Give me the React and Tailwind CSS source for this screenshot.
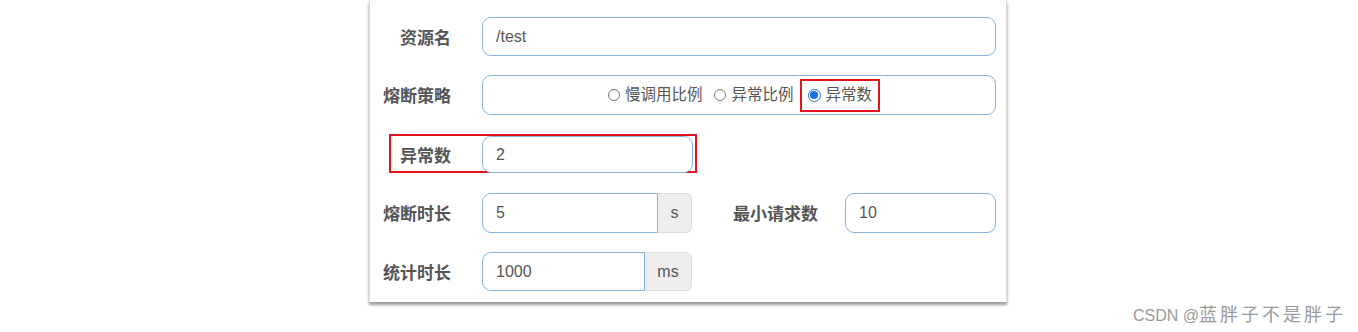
const labelCls =
  "text-right text-[17px] font-bold text-[#555] leading-none shrink-0 pt-[3px]";
const inputCls =
  "flex items-center pl-[13px] border border-[#88b2df] bg-white text-[16px] text-[#555]";

const Radio = ({ checked, label }) => (
  <div className="flex items-center gap-[5px]">
    {checked ? (
      <span className="w-[13px] h-[13px] rounded-full border border-[#1a6fe0] flex items-center justify-center">
        <span className="w-[8px] h-[8px] rounded-full bg-[#1a6fe0]" />
      </span>
    ) : (
      <span className="w-[12px] h-[12px] rounded-full border border-[#777]" />
    )}
    <span className="text-[15.5px] text-[#555]">{label}</span>
  </div>
);

const App = () => {
  return (
    <div
      className="relative w-[1358px] h-[332px] bg-white overflow-hidden"
      style={{ fontFamily: '"Liberation Sans", "Noto Sans CJK SC", sans-serif' }}
    >
      <div className="ml-[369px] w-[638px] h-[302px] bg-white border-x border-[#dcdcdc] shadow-[0_3px_3px_rgba(0,0,0,0.4)] pt-[17px]">
        {/* 资源名 */}
        <div className="flex items-center">
          <div className={`${labelCls} w-[81px]`}>资源名</div>
          <div className={`${inputCls} ml-[31px] w-[514px] h-[39px] rounded-[9px]`}>
            /test
          </div>
        </div>

        {/* 熔断策略 */}
        <div className="flex items-center mt-[19px]">
          <div className={`${labelCls} w-[81px]`}>熔断策略</div>
          <div className="ml-[31px] w-[514px] h-[40px] rounded-[9px] border border-[#88b2df] flex items-center justify-center gap-[12px] pl-[10px]">
            <Radio label="慢调用比例" />
            <Radio label="异常比例" />
            <div className="flex items-center h-[33px] px-[6px] border-2 border-[#e5131b] -ml-[6px]">
              <Radio checked label="异常数" />
            </div>
          </div>
        </div>

        {/* 异常数 */}
        <div className="ml-[19px] mt-[19px] w-[308px] h-[39px] border-2 border-[#e5131b] flex items-stretch">
          <div className={`${labelCls} w-[60px] self-center mt-[3px]`}>异常数</div>
          <div className={`${inputCls} ml-[31px] w-[211px] rounded-[9px] -mb-[2px]`}>
            2
          </div>
        </div>

        {/* 熔断时长 / 最小请求数 */}
        <div className="flex items-center mt-[20px]">
          <div className={`${labelCls} w-[81px]`}>熔断时长</div>
          <div className="ml-[31px] flex h-[40px]">
            <div className={`${inputCls} w-[176px] rounded-l-[9px]`}>5</div>
            <div className="w-[34px] flex items-center justify-center bg-[#eeeeee] border border-l-0 border-[#dddddd] rounded-r-[6px] text-[16px] text-[#555]">
              s
            </div>
          </div>
          <div className={`${labelCls} ml-[41px]`}>最小请求数</div>
          <div className={`${inputCls} ml-[27px] w-[151px] h-[40px] rounded-[9px]`}>
            10
          </div>
        </div>

        {/* 统计时长 */}
        <div className="flex items-center mt-[19px]">
          <div className={`${labelCls} w-[81px]`}>统计时长</div>
          <div className="ml-[31px] flex h-[39px]">
            <div className={`${inputCls} w-[163px] rounded-l-[9px]`}>1000</div>
            <div className="w-[47px] flex items-center justify-center bg-[#eeeeee] border border-l-0 border-[#dddddd] rounded-r-[6px] text-[16px] text-[#555]">
              ms
            </div>
          </div>
        </div>
      </div>

      <div className="absolute left-[1133px] top-[302px] text-[#9a9a9a] text-[16px] whitespace-nowrap">
        CSDN @<span className="text-[18px] tracking-[3px]">蓝胖子不是胖子</span>
      </div>
    </div>
  );
};

export default App;
